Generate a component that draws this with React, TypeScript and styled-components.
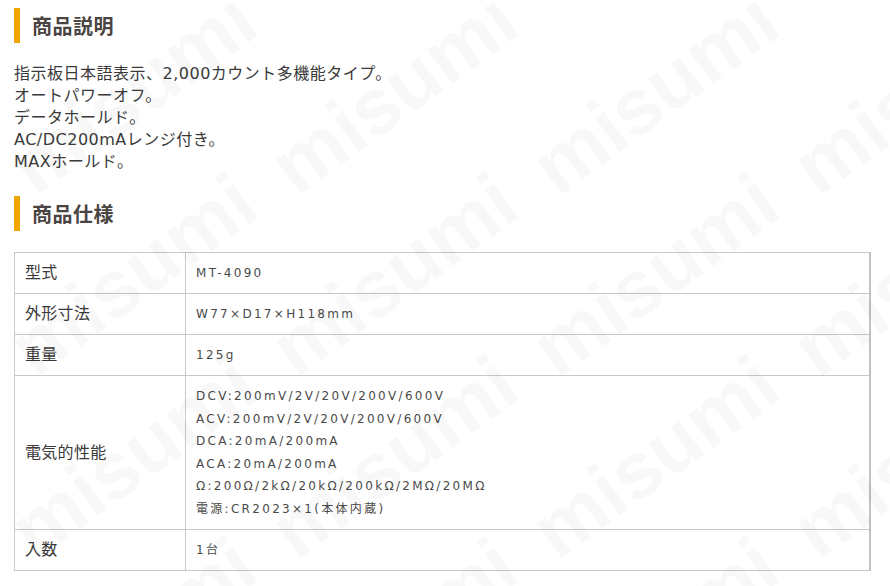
import styled, { createGlobalStyle } from 'styled-components';

const GlobalStyle = createGlobalStyle`
  html, body {
    margin: 0;
    padding: 0;
    background: #fff;
  }
  body {
    font-family: 'DejaVu Sans', 'Noto Sans CJK JP', sans-serif;
    color: #3a3a3a;
  }
`;

const description = [
  '指示板日本語表示、2,000カウント多機能タイプ。',
  'オートパワーオフ。',
  'データホールド。',
  'AC/DC200mAレンジ付き。',
  'MAXホールド。',
];

const specs: { label: string; values: string[] }[] = [
  { label: '型式', values: ['MT-4090'] },
  { label: '外形寸法', values: ['W77×D17×H118mm'] },
  { label: '重量', values: ['125g'] },
  {
    label: '電気的性能',
    values: [
      'DCV:200mV/2V/20V/200V/600V',
      'ACV:200mV/2V/20V/200V/600V',
      'DCA:20mA/200mA',
      'ACA:20mA/200mA',
      'Ω:200Ω/2kΩ/20kΩ/200kΩ/2MΩ/20MΩ',
      '電源:CR2023×1(本体内蔵)',
    ],
  },
  { label: '入数', values: ['1台'] },
];

const App = () => {
  return (
    <Page>
      <GlobalStyle />
      <Heading>商品説明</Heading>
      <Description>
        {description.map((line) => (
          <div key={line}>{line}</div>
        ))}
      </Description>
      <Heading $spaced>商品仕様</Heading>
      <SpecTable>
        <tbody>
          {specs.map((row) => (
            <tr key={row.label}>
              <LabelCell>{row.label}</LabelCell>
              <ValueCell>
                {row.values.map((v) => (
                  <ValueLine key={v} $multi={row.values.length > 1}>
                    {v}
                  </ValueLine>
                ))}
              </ValueCell>
            </tr>
          ))}
        </tbody>
      </SpecTable>
      <Watermark aria-hidden>
        <WatermarkGrid>
          {Array.from({ length: 16 }).map((_, i) => (
            <WatermarkCell key={i}>
              <WatermarkWord>misumi</WatermarkWord>
            </WatermarkCell>
          ))}
        </WatermarkGrid>
      </Watermark>
    </Page>
  );
};

const Page = styled.div`
  position: relative;
  width: 890px;
  height: 586px;
  box-sizing: border-box;
  padding: 8px 19px 0 14px;
  overflow: hidden;
`;

const Heading = styled.h2<{ $spaced?: boolean }>`
  margin: ${(p) => (p.$spaced ? '23px' : '0')} 0 0;
  height: 35px;
  line-height: 35px;
  border-left: 6px solid #f0a500;
  padding-left: 12px;
  font-family: 'Noto Sans CJK JP', sans-serif;
  font-size: 20px;
  font-weight: 700;
  color: #4a4442;
  letter-spacing: 0.5px;
`;

const Description = styled.div`
  margin-top: 20px;
  font-size: 16px;
  line-height: 22px;
  letter-spacing: 0.5px;
  color: #3a3a3a;
`;

const SpecTable = styled.table`
  margin-top: 21px;
  width: 100%;
  border-collapse: collapse;
  border: 1px solid #c8c8c8;
  border-right: 2px solid #c2c2c2;
`;

const LabelCell = styled.td`
  width: 150px;
  padding: 9px 10px;
  border: 1px solid #c8c8c8;
  vertical-align: middle;
  font-size: 16px;
  line-height: 22px;
  letter-spacing: 0.3px;
  color: #3a3a3a;
`;

const ValueCell = styled.td`
  padding: 9px 10px;
  border: 1px solid #c8c8c8;
  vertical-align: middle;
  font-size: 12px;
  letter-spacing: 2.3px;
  color: #4a4a4a;
`;

const ValueLine = styled.div<{ $multi?: boolean }>`
  line-height: ${(p) => (p.$multi ? '22.5px' : '22px')};
`;

const Watermark = styled.div`
  position: absolute;
  inset: 0;
  pointer-events: none;
  overflow: hidden;
`;

const WatermarkGrid = styled.div`
  display: grid;
  grid-template-columns: repeat(4, 261px);
  grid-auto-rows: 182px;
  padding: 2px 0 0 3px;
`;

const WatermarkCell = styled.div`
  display: flex;
  align-items: center;
  justify-content: center;
`;

const WatermarkWord = styled.span`
  transform: rotate(-36deg);
  font-family: 'Liberation Sans', sans-serif;
  font-weight: 700;
  font-size: 80px;
  line-height: 1;
  color: rgba(0, 0, 0, 0.028);
  white-space: nowrap;
`;

export default App;
